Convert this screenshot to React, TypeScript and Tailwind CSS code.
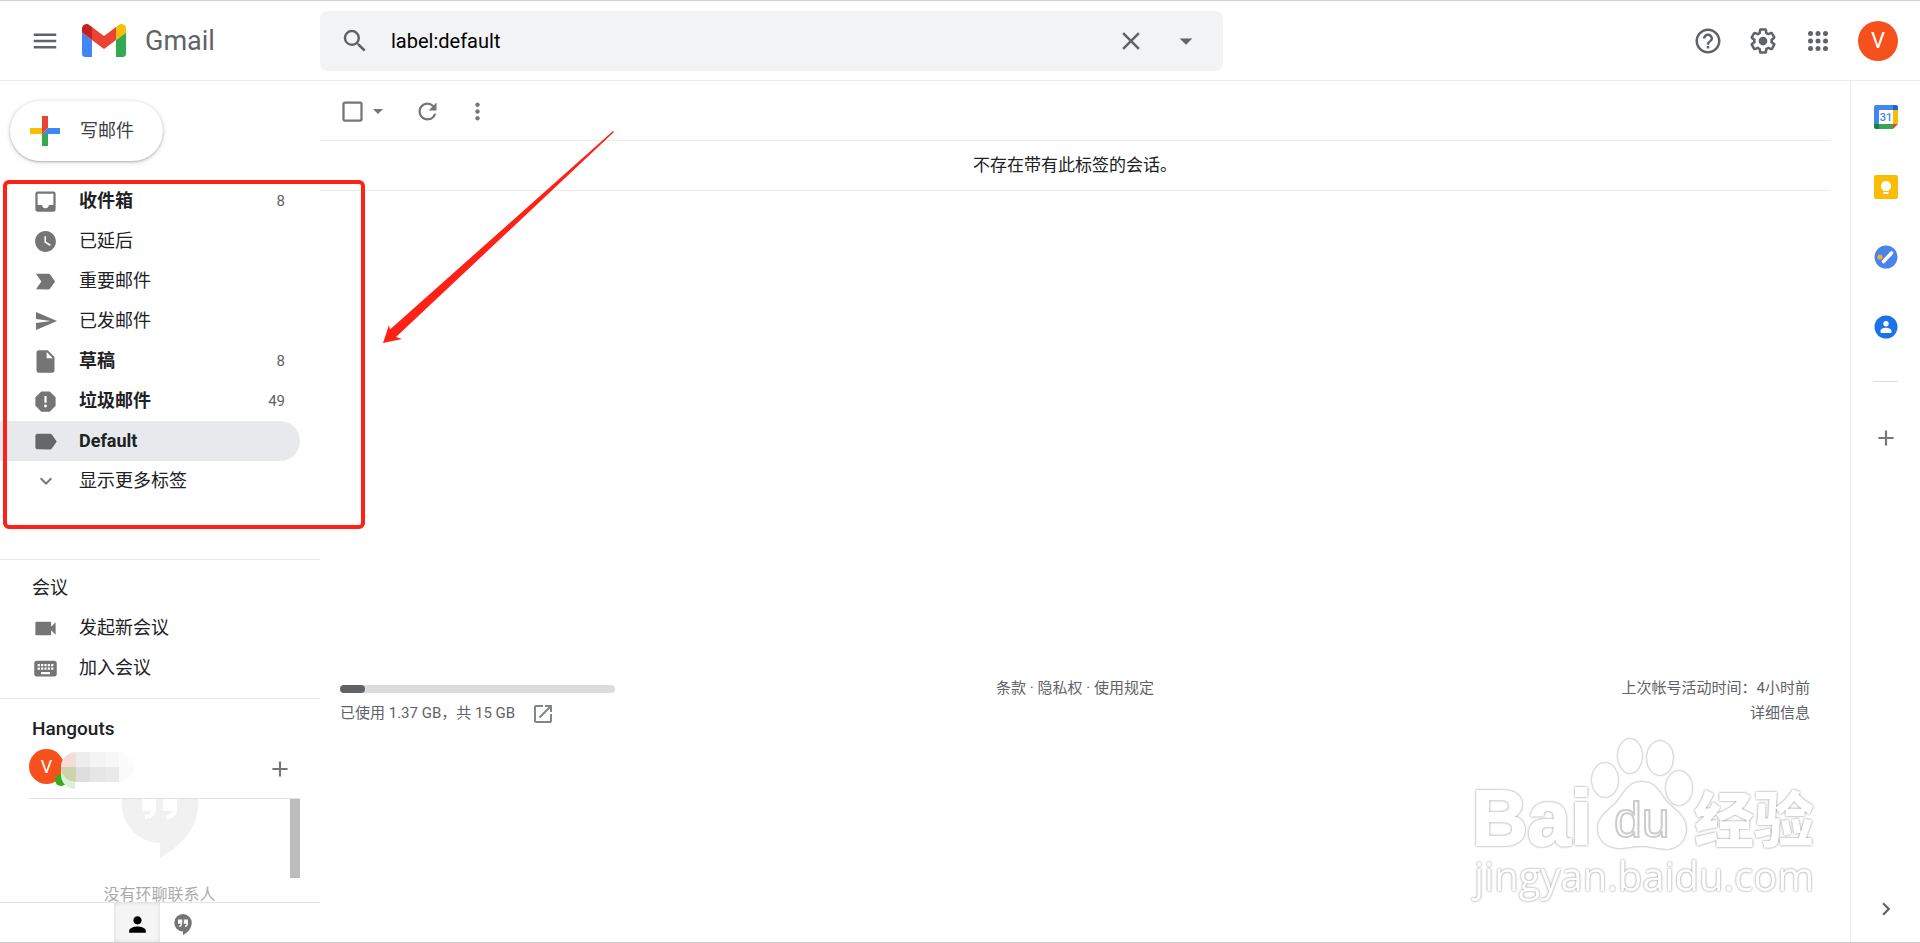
import { useState } from "react";
import type { ReactNode } from "react";
import type { IconType } from "react-icons";
import {
  MdAdd,
  MdArrowDropDown,
  MdCheckBoxOutlineBlank,
  MdChevronRight,
  MdClose,
  MdExpandMore,
  MdHelpOutline,
  MdInbox,
  MdInsertDriveFile,
  MdKeyboard,
  MdLabel,
  MdLabelImportant,
  MdMenu,
  MdMoreVert,
  MdOpenInNew,
  MdPerson,
  MdRefresh,
  MdReport,
  MdSearch,
  MdSend,
  MdVideocam,
  MdWatchLater,
} from "react-icons/md";
import clsx from "clsx";

type Folder = {
  id: string;
  label: string;
  icon: IconType;
  size: number;
  count?: number;
  bold?: boolean;
};

const FOLDERS: Folder[] = [
  { id: "inbox", label: "收件箱", icon: MdInbox, size: 27, count: 8, bold: true },
  { id: "snoozed", label: "已延后", icon: MdWatchLater, size: 25 },
  { id: "important", label: "重要邮件", icon: MdLabelImportant, size: 27 },
  { id: "sent", label: "已发邮件", icon: MdSend, size: 24 },
  { id: "drafts", label: "草稿", icon: MdInsertDriveFile, size: 27, count: 8, bold: true },
  { id: "spam", label: "垃圾邮件", icon: MdReport, size: 27, count: 49, bold: true },
  { id: "default", label: "Default", icon: MdLabel, size: 27, bold: true },
  { id: "more", label: "显示更多标签", icon: MdExpandMore, size: 24 },
];

const MOSAIC = [
  ["bg-[#f6dcd6]", "bg-[#ededed]", "bg-[#f4f4f4]", "bg-[#f7f7f7]", "bg-[#fcfcfc]"],
  ["bg-[#cdd3ad]", "bg-[#dedede]", "bg-[#e6e6e6]", "bg-[#e9e9e9]", "bg-[#fafafa]"],
];

function GmailMark() {
  return (
    <svg viewBox="52 42 88 66" className="h-[33px] w-11" aria-hidden="true">
      <path fill="#4285f4" d="M58 108h14V74L52 59v43c0 3.32 2.69 6 6 6" />
      <path fill="#34a853" d="M120 108h14c3.32 0 6-2.69 6-6V59l-20 15" />
      <path fill="#fbbc04" d="M120 48v26l20-15v-8c0-7.42-8.47-11.65-14.4-7.2" />
      <path fill="#ea4335" d="M72 74V48l24 18 24-18v26L96 92" />
      <path fill="#c5221f" d="M52 51v8l20 15V48l-5.6-4.2c-5.94-4.45-14.4-.22-14.4 7.2" />
    </svg>
  );
}

function GearIcon() {
  return (
    <svg viewBox="0 0 24 24" width="30" height="30" fill="currentColor" aria-hidden="true">
      <path d="M13.85 22.25h-3.7c-.74 0-1.36-.54-1.45-1.27l-.27-1.89c-.27-.14-.53-.29-.79-.46l-1.8.72c-.7.26-1.47-.03-1.81-.65L2.2 15.53c-.35-.66-.2-1.44.36-1.88l1.53-1.19c-.01-.15-.02-.3-.02-.46 0-.15.01-.31.02-.46l-1.52-1.19c-.59-.45-.74-1.26-.37-1.88l1.85-3.19c.34-.62 1.11-.9 1.79-.63l1.81.73c.26-.17.52-.32.78-.46l.27-1.91c.09-.7.71-1.25 1.44-1.25h3.7c.74 0 1.36.54 1.45 1.27l.27 1.89c.27.14.53.29.79.46l1.8-.72c.71-.26 1.48.03 1.82.65l1.84 3.18c.36.66.2 1.44-.36 1.88l-1.52 1.19c.01.15.02.3.02.46s-.01.31-.02.46l1.52 1.19c.56.45.72 1.23.37 1.86l-1.86 3.22c-.34.62-1.11.9-1.8.63l-1.8-.72c-.26.17-.52.32-.78.46l-.27 1.91c-.1.68-.72 1.22-1.46 1.22zm-3.23-2h2.76l.37-2.55.53-.22c.44-.18.88-.44 1.34-.78l.45-.34 2.38.96 1.38-2.4-2.03-1.58.07-.56c.03-.26.06-.51.06-.78s-.03-.53-.06-.78l-.07-.56 2.03-1.58-1.39-2.4-2.39.96-.45-.35c-.42-.32-.87-.58-1.33-.77l-.52-.22-.37-2.55h-2.76l-.37 2.55-.53.21c-.44.19-.88.44-1.34.79l-.45.33-2.38-.95-1.39 2.39 2.03 1.58-.07.56a7 7 0 0 0-.06.79c0 .26.02.53.06.78l.07.56-2.03 1.58 1.38 2.4 2.39-.96.45.35c.43.33.86.58 1.33.77l.53.22.38 2.55z" />
      <circle cx="12" cy="12" r="3.5" />
    </svg>
  );
}

function AppsIcon() {
  return (
    <svg viewBox="0 0 24 24" width="30" height="30" fill="currentColor" aria-hidden="true">
      {[6, 12, 18].map((y) => [6, 12, 18].map((x) => <circle key={`${x}-${y}`} cx={x} cy={y} r="2" />))}
    </svg>
  );
}

function ComposePlus() {
  return (
    <svg viewBox="0 0 30 30" width="30" height="30" aria-hidden="true">
      <path fill="#34a853" d="M12 18h6v12h-6z" />
      <path fill="#4285f4" d="M18 12h12v6H12z" />
      <path fill="#fbbc04" d="M0 12h12v6H0z" />
      <path fill="#ea4335" d="M12 0h6v12l-6 6z" />
    </svg>
  );
}

function CalendarIcon() {
  return (
    <svg viewBox="0 0 24 24" width="24" height="24" aria-hidden="true">
      <path fill="#4285f4" d="M2 0h17v5H5v14H0V2a2 2 0 0 1 2-2z" />
      <path fill="#1967d2" d="M19 0h3a2 2 0 0 1 2 2v3h-5z" />
      <path fill="#fbbc04" d="M19 5h5v14h-5z" />
      <path fill="#34a853" d="M5 19h14v5H5z" />
      <path fill="#188038" d="M0 19h5v5H2a2 2 0 0 1-2-2z" />
      <path fill="#ea4335" d="M19 19h5l-5 5z" />
      <path fill="#fff" d="M5 5h14v14H5z" />
      <text x="12" y="16" textAnchor="middle" fontSize="11" fontWeight="500" fill="#4285f4" fontFamily="Roboto, sans-serif">
        31
      </text>
    </svg>
  );
}

function KeepIcon() {
  return (
    <svg viewBox="0 0 24 24" width="24" height="24" aria-hidden="true">
      <rect width="24" height="24" rx="2" fill="#fbbc04" />
      <path fill="#fff" d="M12 6a5 5 0 0 0-3 9v1h6v-1a5 5 0 0 0-3-9zM9.500 17h5v2h-5z" />
    </svg>
  );
}

function TasksIcon() {
  return (
    <svg viewBox="0 0 24 24" width="24" height="24" aria-hidden="true">
      <circle cx="12" cy="12" r="11.500" fill="#4a83ee" />
      <path stroke="#fff" strokeWidth="3.600" strokeLinecap="round" d="M9.500 16.500l8-8.500" />
      <circle cx="6" cy="12" r="2.600" fill="#f5b21a" />
    </svg>
  );
}

function ContactsIcon() {
  return (
    <svg viewBox="0 0 24 24" width="24" height="24" aria-hidden="true">
      <circle cx="12" cy="12" r="11.500" fill="#1a73e8" />
      <circle cx="12" cy="8.700" r="2.700" fill="#fff" />
      <path fill="#fff" d="M6.500 17v-1c0-2.200 3.200-3.200 5.500-3.200s5.500 1 5.500 3.200v1c0 .5-.4.900-.9.900H7.400a.9.900 0 0 1-.9-.9z" />
    </svg>
  );
}

function HangoutsIcon() {
  return (
    <svg viewBox="0 0 18 21" width="18" height="21" aria-hidden="true">
      <path fill="#757575" d="M9 0a8.700 8.700 0 0 0 0 17.500V21c4.500-2.300 8.700-6.500 8.700-12A8.700 8.700 0 0 0 9 0z" />
      <path fill="#fff" d="M4 5.500h4.200v4c0 2-1.200 3.400-3 3.400v-1.400c1 0 1.500-.7 1.500-1.700H4zM9.800 5.500H14v4c0 2-1.200 3.400-3 3.400v-1.400c1 0 1.500-.7 1.500-1.700H9.800z" />
    </svg>
  );
}

function IconButton({ label, className, children }: { label: string; className?: string; children: ReactNode }) {
  return (
    <button type="button" aria-label={label} className={clsx("flex items-center justify-center", className)}>
      {children}
    </button>
  );
}

function Header() {
  const [query, setQuery] = useState("label:default");
  return (
    <header className="flex h-20 shrink-0 items-center border-b border-[#e8ecf1] text-[#5f6368]">
      <div className="flex w-80 shrink-0 items-center pl-[30px]">
        <IconButton label="主菜单" className="w-[30px]">
          <MdMenu size={30} />
        </IconButton>
        <a href="#inbox" className="ml-[22px] flex items-center gap-[19px]">
          <GmailMark />
          <span className="text-[27px] leading-8">Gmail</span>
        </a>
      </div>
      <form
        role="search"
        className="flex h-[60px] w-full max-w-[903px] items-center rounded-lg bg-[#f1f3f4] pl-5 pr-[22px]"
        onSubmit={(e) => e.preventDefault()}
      >
        <IconButton label="搜索">
          <MdSearch size={30} />
        </IconButton>
        <input
          aria-label="搜索邮件"
          value={query}
          onChange={(e) => setQuery(e.target.value)}
          className="ml-[21px] min-w-0 flex-1 bg-transparent text-xl text-black outline-none"
        />
        <button type="button" aria-label="清除搜索" onClick={() => setQuery("")}>
          <MdClose size={30} />
        </button>
        <IconButton label="搜索选项" className="ml-[25px]">
          <MdArrowDropDown size={30} />
        </IconButton>
      </form>
      <div className="ml-auto flex items-center gap-[25px] pr-[22px]">
        <IconButton label="支持">
          <MdHelpOutline size={30} />
        </IconButton>
        <IconButton label="设置">
          <GearIcon />
        </IconButton>
        <IconButton label="Google 应用">
          <AppsIcon />
        </IconButton>
        <button type="button" aria-label="帐号" className="h-10 w-10 rounded-full bg-[#f6511d] text-[22px] leading-10 text-white">
          V
        </button>
      </div>
    </header>
  );
}

function FolderList() {
  const [active, setActive] = useState("default");
  return (
    <nav aria-label="标签" className="mt-5 w-[300px]">
      {FOLDERS.map(({ id, label, icon: Icon, size, count, bold }) => (
        <a
          key={id}
          href={`#${id}`}
          onClick={() => setActive(id)}
          className={clsx("flex h-10 items-center rounded-r-full pr-[15px] pl-8", active === id && "bg-[#e8e9ed]")}
        >
          <span className={clsx("flex w-[27px] shrink-0 justify-center", active === id ? "text-[#666769]" : "text-[#757575]")}>
            <Icon size={size} />
          </span>
          <span className={clsx("ml-5 flex-1 text-lg text-[#202124]", bold && "font-bold")}>{label}</span>
          {count && <span className="text-[15px] text-[#5f6368]">{count}</span>}
        </a>
      ))}
    </nav>
  );
}

function Sidebar() {
  return (
    <aside className="flex w-80 shrink-0 flex-col pt-5">
      <button
        type="button"
        className="ml-[10px] flex h-[60px] w-[153px] shrink-0 items-center gap-5 rounded-full bg-white pl-5 text-lg text-[#3c4043] shadow-[0_1px_2px_0_rgba(60,64,67,0.3),0_1px_4px_1px_rgba(60,64,67,0.15)]"
      >
        <ComposePlus />
        写邮件
      </button>
      <FolderList />

      <section className="mt-[58px] border-t border-[#e8eaed] pt-2 pb-[10px] text-lg text-[#202124]">
        <h2 className="flex h-10 items-center pl-8">会议</h2>
        <a href="#new-meeting" className="flex h-10 items-center pl-8">
          <span className="flex w-[27px] justify-center text-[#757575]"><MdVideocam size={27} /></span>
          <span className="ml-5">发起新会议</span>
        </a>
        <a href="#join-meeting" className="flex h-10 items-center pl-8">
          <span className="flex w-[27px] justify-center text-[#757575]"><MdKeyboard size={27} /></span>
          <span className="ml-5">加入会议</span>
        </a>
      </section>

      <section className="flex min-h-0 flex-1 flex-col border-t border-[#e8eaed] pt-[10px]">
        <h2 className="flex h-10 shrink-0 items-center pl-8 text-[19px] font-medium text-[#202124]">Hangouts</h2>
        <div className="ml-[29px] flex h-[50px] w-[271px] shrink-0 items-start border-b border-[#e3e3e3]">
          <div className="relative h-9 flex-1">
            <div className="h-[35px] w-[35px] rounded-full bg-[#f6511d] text-center text-lg leading-[35px] text-white">V</div>
            <span className="absolute top-[25px] left-[26px] h-3 w-3 rounded-full bg-[#35ac19]" />
            <span className="absolute top-1 left-8 h-9 w-[14px] rounded-l-full bg-[#dff0da]" />
            <div className="absolute top-[3px] left-8 w-[73px] overflow-hidden rounded-full">
              {MOSAIC.map((row, i) => (
                <div key={i} className="flex">
                  {row.map((cell, j) => <span key={j} className={clsx("h-[15px] flex-1", cell)} />)}
                </div>
              ))}
            </div>
          </div>
          <IconButton label="发起新会话" className="mt-[7px] mr-[7px] text-[#757575]">
            <MdAdd size={26} />
          </IconButton>
        </div>
        <div className="ml-[29px] flex min-h-0 w-[271px] flex-1 overflow-hidden">
          <div className="flex flex-1 flex-col items-center">
            <svg viewBox="0 0 76 60" width="76" height="60" className="shrink-0" aria-hidden="true">
              <path fill="#f1f1f1" d="M0 6a38 38 0 0 0 38 38v15C60 46 76 28 76 6V0H0z" />
              <path fill="#fff" d="M20 0h14v10c0 6-4 10-11 10v-4c4 0 6-2 6-4h-9zM41 0h14v10c0 6-4 10-11 10v-4c4 0 6-2 6-4h-9z" />
            </svg>
            <p className="mt-6 shrink-0 text-base text-[#aaa]">没有环聊联系人</p>
          </div>
          <div className="h-[79px] w-[10px] bg-[#bcbcbc]" />
        </div>
        <div className="flex h-10 shrink-0 border-t border-[#e3e3e3] pl-[114px]">
          <IconButton label="联系人" className="w-[46px] bg-[#f5f5f5] pt-[3px] text-black shadow-[inset_0_0_4px_rgba(0,0,0,0.12)]">
            <MdPerson size={25} />
          </IconButton>
          <IconButton label="环聊" className="w-[46px] pt-[3px]">
            <HangoutsIcon />
          </IconButton>
        </div>
      </section>
    </aside>
  );
}

function Watermark() {
  return (
    <svg
      viewBox="0 0 360 180"
      className="pointer-events-none absolute right-[22px] bottom-[34px] h-[180px] w-[360px] drop-shadow-[0_0_1px_#888]"
      fill="#fff"
      aria-hidden="true"
    >
      <text x="4" y="117" fontSize="77" fontWeight="700" fontFamily="Liberation Sans, sans-serif" stroke="#fff" strokeWidth="2">
        Bai
      </text>
      <ellipse cx="137" cy="52" rx="13" ry="17" />
      <ellipse cx="162" cy="28" rx="12" ry="17" />
      <ellipse cx="192" cy="30" rx="13" ry="17" />
      <ellipse cx="211" cy="60" rx="13" ry="17" />
      <path d="M174 54c-16 0-18 14-28 23-8 8-16 12-16 24 0 11 9 19 22 19 8 0 14-2 22-2s16 3 24 3c12 0 20-9 20-20 0-11-7-16-16-24-10-9-12-23-28-23z" />
      <text x="146" y="109" fontSize="50" fontFamily="Liberation Sans, sans-serif" stroke="#ccc" strokeWidth="2">du</text>
      <text x="226" y="114" fontSize="60" fontWeight="900" fontFamily="Noto Sans CJK SC, sans-serif">经验</text>
      <text x="6" y="163" fontSize="40" fontFamily="Open Sans, sans-serif">jingyan.baidu.com</text>
    </svg>
  );
}

function MailPane() {
  return (
    <main className="relative min-w-0 flex-1 pr-5">
      <div className="flex h-[60px] items-center border-b border-[#e8ecef] pt-px pl-[19px] text-[#757575]">
        <IconButton label="选择">
          <MdCheckBoxOutlineBlank size={27} />
        </IconButton>
        <IconButton label="选择选项">
          <MdArrowDropDown size={24} />
        </IconButton>
        <IconButton label="刷新" className="ml-6">
          <MdRefresh size={27} />
        </IconButton>
        <IconButton label="更多" className="ml-[23px]">
          <MdMoreVert size={27} />
        </IconButton>
      </div>
      <p className="flex h-[50px] items-center justify-center border-b border-[#ebebeb] text-[17px] text-[#202124]">
        不存在带有此标签的会话。
      </p>

      <footer className="mt-[485px] grid grid-cols-3 px-5 text-[15px] leading-[25px] text-[#5f6368]">
        <div>
          <div className="mt-[9px] h-2 w-[275px] rounded-full bg-[#dadce0]">
            <div className="h-2 w-[25px] rounded-full bg-[#5f6368]" />
          </div>
          <a href="#storage" className="mt-2 flex items-center gap-4">
            已使用 1.37 GB，共 15 GB
            <MdOpenInNew size={24} className="text-[#80868b]" />
          </a>
        </div>
        <p className="text-center">
          <a href="#terms">条款</a> · <a href="#privacy">隐私权</a> · <a href="#policy">使用规定</a>
        </p>
        <div className="text-right">
          <p>上次帐号活动时间：4小时前</p>
          <a href="#details">详细信息</a>
        </div>
      </footer>
      <Watermark />
    </main>
  );
}

function SideRail() {
  return (
    <aside className="flex w-[70px] shrink-0 flex-col items-center border-l border-[#eceff1] pt-6 pb-5 text-[#757575]">
      <div className="flex flex-col gap-[46px]">
        <IconButton label="日历"><CalendarIcon /></IconButton>
        <IconButton label="Keep"><KeepIcon /></IconButton>
        <IconButton label="Tasks"><TasksIcon /></IconButton>
        <IconButton label="通讯录"><ContactsIcon /></IconButton>
      </div>
      <hr className="mt-[42px] w-[25px] border-[#dadce0]" />
      <IconButton label="获取插件" className="mt-[43px]">
        <MdAdd size={26} />
      </IconButton>
      <IconButton label="隐藏侧边栏" className="mt-auto text-[#5f6368]">
        <MdChevronRight size={26} />
      </IconButton>
    </aside>
  );
}

function Annotation() {
  return (
    <>
      <div className="pointer-events-none absolute top-[179px] left-[3px] h-[349px] w-[362px] rounded-md border-4 border-[#ff2116]" />
      <svg viewBox="0 0 240 220" className="pointer-events-none absolute top-[127px] left-[378px] h-[220px] w-[240px]" aria-hidden="true">
        <path fill="#ff2116" d="M5 215l6-18 1 4.500L235 3l1 1L18 209l6 2z" />
      </svg>
    </>
  );
}

export default function App() {
  return (
    <div className="relative flex h-screen flex-col overflow-hidden border-y border-[#cfcfcf] bg-white font-[Roboto,'Noto_Sans_CJK_SC',sans-serif]">
      <Header />
      <div className="flex min-h-0 flex-1">
        <Sidebar />
        <MailPane />
        <SideRail />
      </div>
      <Annotation />
    </div>
  );
}
